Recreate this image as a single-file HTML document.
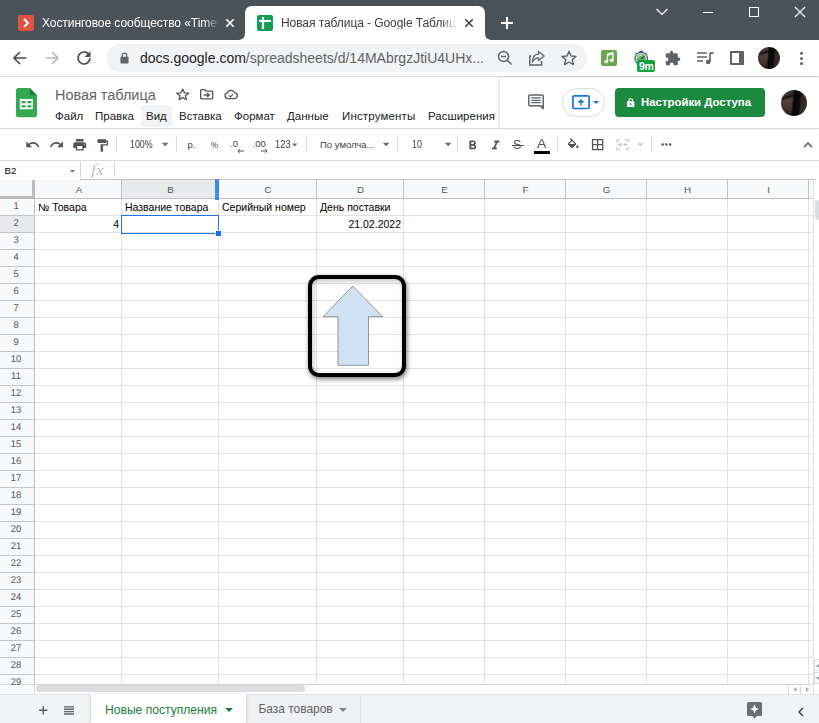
<!DOCTYPE html>
<html lang="ru"><head><meta charset="utf-8"><title>Новая таблица - Google Таблицы</title>
<style>
*{box-sizing:border-box;margin:0;padding:0}
html,body{width:819px;height:723px;overflow:hidden;background:#fff;font-family:"Liberation Sans",sans-serif;}
.a{position:absolute}
.t{position:absolute;white-space:nowrap;line-height:1}
svg{position:absolute;overflow:visible}
#tabstrip{left:0;top:0;width:819px;height:40px;background:#4a535a}
#navbar{left:0;top:40px;width:819px;height:37px;background:#fff;border-bottom:1px solid #d9dadb}
#pill{left:106px;top:44px;width:481px;height:28px;border-radius:14px;background:#f1f3f4}
.vl{position:absolute;top:199px;width:1px;height:485px;background:#e2e2e2}
.hl{position:absolute;left:35px;width:779px;height:1px;background:#e2e2e2}
.rn{position:absolute;left:-1px;width:34px;text-align:center;font-size:10.100px;transform:scale(0.930,0.960) rotate(0.03deg);transform-origin:50% 83%;color:#50545a;line-height:1}
.cn{position:absolute;top:185.200px;text-align:center;font-size:9.700px;color:#50545a;line-height:1}
.cell{position:absolute;font-size:10.5px;color:#000;line-height:1;white-space:nowrap}
.menu{position:absolute;top:110.600px;font-size:11.5px;color:#202124;line-height:1;white-space:nowrap}
.sep{position:absolute;top:136px;width:1px;height:16px;background:#dadce0}
.tb{position:absolute;font-size:9.5px;color:#3c4043;line-height:1;white-space:nowrap}
</style></head><body>
<div class="a" id="tabstrip"></div>
<svg style="left:0;top:0" width="819" height="40"><path d="M237 40 C243 40 245 38 245 32 L245 14 C245 8.500 247.500 6 253 6 L477 6 C482.500 6 485 8.500 485 14 L485 32 C485 38 487 40 493 40 Z" fill="#fff"/></svg>
<div class="a" style="left:18px;top:15px;width:16px;height:16px;background:#e0533f;border-radius:2px"></div>
<svg style="left:18px;top:15px" width="16" height="16"><path d="M6 4 L10 8 L6 12" fill="none" stroke="#fff" stroke-width="2"/></svg>
<div class="t" style="left:42px;top:17px;font-size:12px;letter-spacing:-0.060px;color:#fff;width:178px;overflow:hidden;-webkit-mask-image:linear-gradient(90deg,#000 162px,transparent 177px)">Хостинговое сообщество «Timeweb»</div>
<svg style="left:226px;top:19.300px" width="8" height="8"><path d="M0.300 0.300 L7.700 7.700 M7.700 0.300 L0.300 7.700" stroke="#fff" stroke-width="1.600" fill="none"/></svg>
<div class="a" style="left:257px;top:15px;width:16px;height:16px;background:#0f9d58;border-radius:2px"></div>
<svg style="left:257px;top:15px" width="16" height="16"><path d="M2 6 H14 M6 2 V14" stroke="#fff" stroke-width="2.2" fill="none"/></svg>
<div class="t" style="left:281px;top:17px;font-size:12px;letter-spacing:-0.070px;color:#3c4043;width:178px;overflow:hidden;-webkit-mask-image:linear-gradient(90deg,#000 160px,transparent 176px)">Новая таблица - Google Таблицы</div>
<svg style="left:465px;top:19.300px" width="8" height="8"><path d="M0.300 0.300 L7.700 7.700 M7.700 0.300 L0.300 7.700" stroke="#3c4043" stroke-width="1.600" fill="none"/></svg>
<svg style="left:501px;top:17px" width="12" height="12"><path d="M6 0 V12 M0 6 H12" stroke="#fff" stroke-width="2" fill="none"/></svg>
<svg style="left:656px;top:8px" width="12" height="8"><path d="M0.500 1 L6 6.500 L11.500 1" stroke="#fff" stroke-width="1.100" fill="none"/></svg>
<div class="a" style="left:703px;top:12px;width:10px;height:1px;background:#fff"></div>
<div class="a" style="left:749px;top:7px;width:10px;height:10px;border:1px solid #fff"></div>
<svg style="left:795px;top:7px" width="10" height="10"><path d="M0 0 L10 10 M10 0 L0 10" stroke="#fff" stroke-width="1.100" fill="none"/></svg>
<div class="a" id="navbar"></div>
<div class="a" id="pill"></div>
<svg style="left:13px;top:51px" width="14" height="14"><path d="M13.500 7 H1.500 M7 1 L1 7 L7 13" stroke="#4a4e52" stroke-width="1.700" fill="none"/></svg>
<svg style="left:45px;top:51px" width="14" height="14"><path d="M0.500 7 H12.500 M7 1 L13 7 L7 13" stroke="#b5b8bb" stroke-width="1.700" fill="none"/></svg>
<svg style="left:76px;top:50px" width="16" height="16"><path d="M12.500 4 A6 6 0 1 0 14 8" stroke="#4a4e52" stroke-width="1.700" fill="none"/><path d="M14.500 1 V7 H8.500 Z" fill="#4a4e52"/></svg>
<svg style="left:119.500px;top:51.500px" width="9" height="12" viewBox="0 0 10 13"><rect x="0.500" y="5" width="9" height="7.500" rx="1" fill="#5f6368"/><path d="M2.500 5.500 V3.500 A2.500 2.500 0 0 1 7.500 3.500 V5.500" stroke="#5f6368" stroke-width="1.400" fill="none"/></svg>
<div class="t" style="left:140px;top:51px;font-size:14px;color:#202124">docs.google.com<span style="color:#5f6368">/spreadsheets/d/14MAbrgzJtiU4UHx...</span></div>
<svg style="left:497px;top:50px" width="16" height="16"><circle cx="6.500" cy="6.500" r="5" stroke="#5f6368" stroke-width="1.500" fill="none"/><path d="M10.200 10.200 L14.500 14.500 M4 6.500 H9" stroke="#5f6368" stroke-width="1.500" fill="none"/></svg>
<svg style="left:529px;top:50px" width="17" height="16"><path d="M2 6 H0.800 V15 H12.500 V11" stroke="#5f6368" stroke-width="1.400" fill="none"/><path d="M9.500 1.500 L15 6 L9.500 10.500 V7.800 C6 7.800 4.500 9.500 3.500 12 C3.500 7.500 6 4.500 9.500 4.200 Z" stroke="#5f6368" stroke-width="1.300" fill="none" stroke-linejoin="round"/></svg>
<svg style="left:561px;top:50px" width="16" height="16"><path d="M8 1.300 L10 6 L15 6.400 L11.200 9.700 L12.400 14.600 L8 12 L3.600 14.600 L4.800 9.700 L1 6.400 L6 6 Z" stroke="#5f6368" stroke-width="1.400" fill="none" stroke-linejoin="round"/></svg>
<div class="a" style="left:601px;top:50px;width:16px;height:16px;background:#6aa84f;border-radius:2px"></div>
<svg style="left:601px;top:50px" width="16" height="16"><ellipse cx="5.200" cy="11.600" rx="2" ry="1.600" fill="#fff"/><ellipse cx="10.600" cy="10.300" rx="2" ry="1.600" fill="#fff"/><path d="M6.500 11.600 V4.200 L11.900 2.900 V10.300" stroke="#fff" stroke-width="1.300" fill="none"/><path d="M6.500 3.600 L11.900 2.300 V4.600 L6.500 5.900 Z" fill="#fff"/></svg>
<svg style="left:633px;top:48.800px" width="24" height="24"><circle cx="8.200" cy="9.500" r="6.300" stroke="#1d4e6f" stroke-width="1.100" fill="#fff"/><path d="M6.300 2.300 H10.100 M8.200 2.300 V3.500 M13 4.700 L13.900 3.800 M3.400 4.700 L2.500 3.800" stroke="#1d4e6f" stroke-width="1" fill="none"/><circle cx="8.200" cy="9.500" r="4.700" fill="#6ab04c"/><path d="M5 9 A3.500 3.500 0 0 1 9 6.200" stroke="#d7ecc9" stroke-width="1" fill="none"/><path d="M8 10 L11.500 7.300" stroke="#1d4e6f" stroke-width="1.200"/></svg>
<div class="a" style="left:637px;top:60px;width:18px;height:12px;background:#12a03f;border-radius:2px"></div>
<div class="t" style="left:639px;top:61px;font-size:10.500px;font-weight:bold;color:#fff;letter-spacing:-0.400px">9m</div>
<svg style="left:665px;top:50px" width="16" height="16"><path d="M6.500 0.800 A1.600 1.600 0 0 1 8.100 2.400 V3.200 H11.500 A1.300 1.300 0 0 1 12.800 4.500 V7.500 H13.600 A1.800 1.800 0 0 1 13.600 11.100 H12.800 V14 A1.300 1.300 0 0 1 11.500 15.300 H8.700 V14.400 A1.900 1.900 0 0 0 4.900 14.400 V15.300 H2 A1.300 1.300 0 0 1 0.700 14 V11.200 H1.600 A1.900 1.900 0 0 0 1.600 7.400 H0.700 V4.500 A1.300 1.300 0 0 1 2 3.200 H4.900 V2.400 A1.600 1.600 0 0 1 6.500 0.800 Z" fill="#5f6368"/></svg>
<svg style="left:697px;top:50px" width="17" height="16"><path d="M0 3 H10 M0 7 H10 M0 11 H6" stroke="#5f6368" stroke-width="1.700"/><path d="M13 3 V11.500" stroke="#5f6368" stroke-width="1.600"/><path d="M13 3 H16.500" stroke="#5f6368" stroke-width="1.800"/><circle cx="11.200" cy="12" r="2.300" fill="#5f6368"/></svg>
<div class="a" style="left:730px;top:51px;width:14px;height:14px;border:2px solid #5f6368;border-right-width:5.500px;border-radius:1px"></div>
<div class="a" style="left:758px;top:47px;width:22px;height:22px;border-radius:11px;background:linear-gradient(165deg,transparent 18%,rgba(10,10,10,0.800) 26%,transparent 36%),linear-gradient(95deg,transparent 42%,#090807 49%,#0d0b0a 68%,#33261f 76%,#3a2c26 100%),linear-gradient(180deg,#352a25 0,#57453b 30%,#4a3830 60%,#2a1f1a 100%)"></div>
<svg style="left:800px;top:51px" width="4" height="16"><circle cx="1.500" cy="2.300" r="1.500" fill="#5f6368"/><circle cx="1.500" cy="7.400" r="1.500" fill="#5f6368"/><circle cx="1.500" cy="12.500" r="1.500" fill="#5f6368"/></svg>
<svg style="left:16.400px;top:87.800px" width="21" height="29.300"><path d="M2.500 0 H13.800 L21 7.200 V26.800 A2.500 2.500 0 0 1 18.500 29.300 H2.500 A2.500 2.500 0 0 1 0 26.800 V2.500 A2.500 2.500 0 0 1 2.500 0 Z" fill="#34a853"/><path d="M13.800 0 L21 7.200 H13.800 Z" fill="#188038"/><path d="M3.800 11.100 H16.800 V21.300 H3.800 Z M5.500 13.100 V15.200 H9.600 V13.100 Z M11.300 13.100 V15.200 H15.500 V13.100 Z M5.500 17.200 V19.400 H9.600 V17.200 Z M11.300 17.200 V19.400 H15.500 V17.200 Z" fill="#fff" fill-rule="evenodd"/></svg>
<div class="t" style="left:55px;top:87.500px;font-size:14.450px;color:#5f6368">Новая таблица</div>
<svg style="left:176.200px;top:87.600px" width="13.430" height="12.700" viewBox="0 0 15 15" preserveAspectRatio="none"><path d="M7.500 1.200 L9.400 5.700 L14.200 6.100 L10.500 9.200 L11.700 13.900 L7.500 11.400 L3.300 13.900 L4.500 9.200 L0.800 6.100 L5.600 5.700 Z" stroke="#53575c" stroke-width="1.450" fill="none" stroke-linejoin="round"/></svg>
<svg style="left:200.330px;top:89px" width="13.330" height="10.620" viewBox="0 0 14 12" preserveAspectRatio="none"><path d="M1.500 0.800 H5 L6.300 2.300 H12.500 A0.800 0.800 0 0 1 13.300 3.100 V10.400 A0.800 0.800 0 0 1 12.500 11.200 H1.500 A0.800 0.800 0 0 1 0.700 10.400 V1.600 A0.800 0.800 0 0 1 1.500 0.800 Z" stroke="#53575c" stroke-width="1.450" fill="none"/><path d="M4 6.800 H9.500 M7.500 4.500 L9.800 6.800 L7.500 9.100" stroke="#53575c" stroke-width="1.450" fill="none"/></svg>
<svg style="left:224.200px;top:88.700px" width="13.700" height="10.580" viewBox="0 0 15 12" preserveAspectRatio="none"><path d="M4 10.800 A3.200 3.200 0 0 1 3.600 4.500 A4.200 4.200 0 0 1 11.600 4.400 A3.200 3.200 0 0 1 11.400 10.800 Z" stroke="#53575c" stroke-width="1.450" fill="none"/><path d="M5.300 7.300 L7 9 L10 5.800" stroke="#53575c" stroke-width="1.300" fill="none"/></svg>
<div class="a" style="left:141px;top:105px;width:31px;height:22px;background:#f1f3f4;border-radius:4px"></div>
<div class="menu" style="left:55px">Файл</div>
<div class="menu" style="left:95px">Правка</div>
<div class="menu" style="left:146px">Вид</div>
<div class="menu" style="left:179px">Вставка</div>
<div class="menu" style="left:234px">Формат</div>
<div class="menu" style="left:287px">Данные</div>
<div class="menu" style="left:342px;letter-spacing:0.150px">Инструменты</div>
<div class="menu" style="left:428px">Расширения</div>
<div class="a" style="left:500px;top:78px;width:319px;height:50px;background:#fff;box-shadow:-1px 0 3px rgba(0,0,0,0.160)"></div>
<div class="a" style="left:0;top:128px;width:819px;height:1px;background:#dadce0"></div>
<svg style="left:528px;top:93.800px" width="16" height="16"><path d="M2 0.900 H14 A1.200 1.200 0 0 1 15.200 2.100 V14.600 L12.200 11.700 H2 A1.200 1.200 0 0 1 0.800 10.500 V2.100 A1.200 1.200 0 0 1 2 0.900 Z" fill="#fff" stroke="#5f6368" stroke-width="1.500" stroke-linejoin="round"/><path d="M3.200 3.900 H12.800 M3.200 6.300 H12.800 M3.200 8.700 H12.800" stroke="#5f6368" stroke-width="1.300"/><path d="M12 11.500 L15.200 14.800 V11.500 Z" fill="#5f6368"/></svg>
<div class="a" style="left:562px;top:88px;width:43px;height:29px;border:1px solid #dadce0;border-radius:15px;background:#fff"></div>
<svg style="left:572px;top:95px" width="18" height="14.400"><rect x="0.900" y="0.900" width="16.200" height="12.600" rx="1.200" stroke="#1a73e8" stroke-width="1.700" fill="none"/><path d="M9 10.500 V5.300 M6.500 7.600 L9 5.100 L11.500 7.600" stroke="#1a73e8" stroke-width="1.500" fill="none"/></svg>
<svg style="left:593.300px;top:101.100px" width="6.200" height="2.900"><path d="M0 0 H6.200 L3.100 2.900 Z" fill="#1a73e8"/></svg>
<div class="a" style="left:615px;top:88px;width:150px;height:29px;background:#1c8a3e;border-radius:4px"></div>
<svg style="left:626.700px;top:97.500px" width="7.400" height="9"><rect x="0" y="3.300" width="7.400" height="5.700" rx="0.800" fill="#fff"/><path d="M1.900 3.800 V2.500 A1.800 1.800 0 0 1 5.500 2.500 V3.800" stroke="#fff" stroke-width="1.100" fill="none"/><circle cx="3.700" cy="6.200" r="0.850" fill="#1e8e3e"/></svg>
<div class="t" style="left:641px;top:97px;font-size:11.4px;font-weight:bold;color:#fff">Настройки Доступа</div>
<div class="a" style="left:781px;top:89.500px;width:26px;height:26px;border-radius:13px;background:linear-gradient(165deg,transparent 18%,rgba(10,10,10,0.800) 26%,transparent 36%),linear-gradient(95deg,transparent 42%,#090807 49%,#0d0b0a 68%,#33261f 76%,#3a2c26 100%),linear-gradient(180deg,#352a25 0,#57453b 30%,#4a3830 60%,#2a1f1a 100%)"></div>
<div class="a" style="left:0;top:160px;width:819px;height:1px;background:#dadce0"></div>
<svg style="left:25.03px;top:137.08px" width="15.24" height="15.24" viewBox="0 0 24 24"><path d="M12.5 8c-2.65 0-5.05.99-6.9 2.6L2 7v9h9l-3.62-3.62c1.39-1.16 3.16-1.88 5.12-1.88 3.54 0 6.55 2.31 7.6 5.5l2.37-.78C21.08 11.03 17.15 8 12.5 8z" fill="#50545a"/></svg>
<svg style="left:49.03px;top:137.08px" width="15.24" height="15.24" viewBox="0 0 24 24"><path d="M18.4 10.6C16.55 8.99 14.15 8 11.5 8c-4.65 0-8.58 3.03-9.96 7.22L3.9 16c1.05-3.19 4.05-5.5 7.6-5.5 1.95 0 3.73.72 5.12 1.88L13 16h9V7l-3.6 3.6z" fill="#50545a"/></svg>
<svg style="left:71.56px;top:137.26px" width="15.48" height="15.48" viewBox="0 0 24 24"><path d="M19 8H5c-1.66 0-3 1.34-3 3v6h4v4h12v-4h4v-6c0-1.66-1.34-3-3-3zm-3 11H8v-5h8v5zm3-7c-.55 0-1-.45-1-1s.45-1 1-1 1 .45 1 1-.45 1-1 1zm-1-9H6v4h12V3z" fill="#50545a"/></svg>
<svg style="left:94.96px;top:137.56px" width="14.88" height="14.88" viewBox="0 0 24 24"><path d="M18 4V3c0-.55-.45-1-1-1H5c-.55 0-1 .45-1 1v4c0 .55.45 1 1 1h12c.55 0 1-.45 1-1V6h1v4H9v11c0 .55.45 1 1 1h2c.55 0 1-.45 1-1v-9h8V4h-3z" fill="#50545a"/></svg>
<svg style="left:157.24px;top:135.94px" width="16.32" height="16.32" viewBox="0 0 24 24"><path d="M7 10l5 5 5-5z" fill="#6a6e73"/></svg>
<svg style="left:288.08px;top:138.28px" width="13.44" height="13.44" viewBox="0 0 24 24"><path d="M7 10l5 5 5-5z" fill="#6a6e73"/></svg>
<svg style="left:378.14px;top:135.94px" width="16.32" height="16.32" viewBox="0 0 24 24"><path d="M7 10l5 5 5-5z" fill="#6a6e73"/></svg>
<svg style="left:439.54px;top:135.94px" width="16.32" height="16.32" viewBox="0 0 24 24"><path d="M7 10l5 5 5-5z" fill="#6a6e73"/></svg>
<svg style="left:465.24px;top:138.14px" width="15.12" height="15.12" viewBox="0 0 24 24"><path d="M15.6 10.79c.97-.67 1.65-1.77 1.65-2.79 0-2.26-1.75-4-4-4H7v14h7.04c2.09 0 3.71-1.7 3.71-3.79 0-1.52-.86-2.82-2.15-3.42zM10 6.5h3c.83 0 1.5.67 1.5 1.5s-.67 1.5-1.5 1.5h-3v-3zm3.5 9H10v-3h3.5c.83 0 1.5.67 1.5 1.5s-.67 1.5-1.5 1.5z" fill="#50545a"/></svg>
<svg style="left:488.34px;top:138.14px" width="15.12" height="15.12" viewBox="0 0 24 24"><path d="M10 4v3h2.21l-3.42 8H6v3h8v-3h-2.21l3.42-8H18V4z" fill="#50545a"/></svg>
<svg style="left:566.00px;top:138.40px" width="14.40" height="14.40" viewBox="0 0 24 24"><path d="M16.56 8.94L7.62 0 6.21 1.41l2.38 2.38-5.15 5.15c-.59.59-.59 1.54 0 2.12l5.5 5.5c.29.29.68.44 1.06.44s.77-.15 1.06-.44l5.5-5.5c.59-.58.59-1.53 0-2.12zM5.21 10L10 5.21 14.79 10H5.210zM19 11.5s-2 2.170-2 3.500c0 1.100.9 2 2 2s2-.9 2-2c0-1.330-2-3.500-2-3.500z" fill="#50545a"/></svg>
<svg style="left:590.08px;top:137.08px" width="15.24" height="15.24" viewBox="0 0 24 24"><path d="M3 3v18h18V3H3zm8 16H5v-6h6v6zm0-8H5V5h6v6zm8 8h-6v-6h6v6zm0-8h-6V5h6v6z" fill="#50545a"/></svg>
<svg style="left:632.96px;top:137.46px" width="14.88" height="14.88" viewBox="0 0 24 24"><path d="M7 10l5 5 5-5z" fill="#c4c7ca"/></svg>
<svg style="left:659.36px;top:137.36px" width="14.88" height="14.88" viewBox="0 0 24 24"><path d="M6 10c-1.100 0-2 .9-2 2s.9 2 2 2 2-.9 2-2-.9-2-2-2zm12 0c-1.100 0-2 .9-2 2s.9 2 2 2 2-.9 2-2-.9-2-2-2zm-6 0c-1.100 0-2 .9-2 2s.9 2 2 2 2-.9 2-2-.9-2-2-2z" fill="#50545a"/></svg>
<svg style="left:799.40px;top:135.50px" width="18.00" height="18.00" viewBox="0 0 24 24"><path d="M7.410 15.410L12 10.830l4.590 4.580L18 14l-6-6-6 6z" fill="#50545a"/></svg>
<div class="sep" style="left:116px"></div>
<div class="tb" style="left:130.400px;top:139.500px;font-size:10px;transform:scaleX(0.885);transform-origin:0 0">100%</div>
<div class="sep" style="left:176px"></div>
<div class="tb" style="left:187.500px;top:140px;font-size:9.5px">р.</div>
<div class="tb" style="left:210.800px;top:139.800px;font-size:9.500px;transform:scaleX(0.82);transform-origin:0 0">%</div>
<div class="tb" style="left:230.200px;top:139px;font-size:9.5px">.0</div>
<svg style="left:236.500px;top:148.500px" width="7" height="4"><path d="M7 2 H1 M2.800 0.300 L1 2 L2.800 3.700" stroke="#50545a" stroke-width="1" fill="none"/></svg>
<div class="tb" style="left:252.500px;top:139px;font-size:9.5px">.00</div>
<svg style="left:260.500px;top:149px" width="7" height="4"><path d="M0 2 H6 M4.200 0.300 L6 2 L4.200 3.700" stroke="#50545a" stroke-width="1" fill="none"/></svg>
<div class="tb" style="left:275px;top:139.500px;font-size:10px;transform:scaleX(0.935);transform-origin:0 0">123</div>
<div class="sep" style="left:306px"></div>
<div class="tb" style="left:320px;top:140px;font-size:9.5px">По умолча...</div>
<div class="sep" style="left:397px"></div>
<div class="tb" style="left:411.500px;top:139.500px;font-size:10px;transform:scaleX(0.9);transform-origin:0 0">10</div>
<div class="sep" style="left:457px"></div>
<div class="tb" style="left:513px;top:138.500px;font-size:12.500px;color:#50545a">S</div>
<div class="a" style="left:512.400px;top:144.600px;width:11.600px;height:1.200px;background:#50545a"></div>
<div class="tb" style="left:536.800px;top:137px;font-size:13px;color:#50545a;transform:scaleX(1.08);transform-origin:0 0">A</div>
<div class="a" style="left:534px;top:151px;width:16px;height:3px;background:#000"></div>
<div class="sep" style="left:557px"></div>
<svg style="left:616px;top:139.200px" width="13" height="11.300"><path d="M0.700 3.500 V0.700 H4 M9 0.700 H12.300 V3.500 M12.300 7.800 V10.600 H9 M4 10.600 H0.700 V7.800" stroke="#c4c7ca" stroke-width="1.400" fill="none" stroke-dasharray="2.2 0.9"/><path d="M1.500 5.650 H5.300 M3.800 4.200 L5.300 5.650 L3.800 7.100 M11.500 5.650 H7.700 M9.200 4.200 L7.700 5.650 L9.200 7.100" stroke="#c4c7ca" stroke-width="1.100" fill="none"/></svg>
<div class="sep" style="left:651px"></div>
<div class="t" style="left:4.500px;top:166px;font-size:9.6px;color:#000">B2</div>
<svg style="left:69.800px;top:169.500px" width="5" height="2.600"><path d="M0 0 H5 L2.500 2.600 Z" fill="#666"/></svg>
<div class="a" style="left:80px;top:162px;width:1px;height:17px;background:#d4d6da"></div>
<div class="t" style="left:90.500px;top:162.500px;font-size:15px;font-style:italic;color:#bfbfbf;font-family:'Liberation Serif',serif;transform:scaleX(1.2);transform-origin:0 0">fx</div>
<div class="a" style="left:114px;top:163px;width:1px;height:14px;background:#d4d6da"></div>
<div class="a" style="left:0;top:180px;width:814px;height:19px;background:#f8f9fa;border-bottom:1px solid #c0c0c0"></div><div class="a" style="left:80px;top:179px;width:736px;height:1px;background:#c4c4c4"></div>
<div class="a" style="left:0;top:199px;width:35px;height:485px;background:#f8f9fa"></div>
<div class="a" style="left:122px;top:180px;width:96px;height:18px;background:#e8eaed"></div>
<div class="a" style="left:0;top:216px;width:34px;height:16px;background:#e8eaed"></div>
<div class="hl" style="top:215px"></div><div class="a" style="left:0;top:215px;width:35px;height:1px;background:#c6c6c6"></div>
<div class="hl" style="top:232px"></div><div class="a" style="left:0;top:232px;width:35px;height:1px;background:#c6c6c6"></div>
<div class="hl" style="top:249px"></div><div class="a" style="left:0;top:249px;width:35px;height:1px;background:#c6c6c6"></div>
<div class="hl" style="top:266px"></div><div class="a" style="left:0;top:266px;width:35px;height:1px;background:#c6c6c6"></div>
<div class="hl" style="top:283px"></div><div class="a" style="left:0;top:283px;width:35px;height:1px;background:#c6c6c6"></div>
<div class="hl" style="top:300px"></div><div class="a" style="left:0;top:300px;width:35px;height:1px;background:#c6c6c6"></div>
<div class="hl" style="top:317px"></div><div class="a" style="left:0;top:317px;width:35px;height:1px;background:#c6c6c6"></div>
<div class="hl" style="top:334px"></div><div class="a" style="left:0;top:334px;width:35px;height:1px;background:#c6c6c6"></div>
<div class="hl" style="top:351px"></div><div class="a" style="left:0;top:351px;width:35px;height:1px;background:#c6c6c6"></div>
<div class="hl" style="top:368px"></div><div class="a" style="left:0;top:368px;width:35px;height:1px;background:#c6c6c6"></div>
<div class="hl" style="top:385px"></div><div class="a" style="left:0;top:385px;width:35px;height:1px;background:#c6c6c6"></div>
<div class="hl" style="top:402px"></div><div class="a" style="left:0;top:402px;width:35px;height:1px;background:#c6c6c6"></div>
<div class="hl" style="top:419px"></div><div class="a" style="left:0;top:419px;width:35px;height:1px;background:#c6c6c6"></div>
<div class="hl" style="top:436px"></div><div class="a" style="left:0;top:436px;width:35px;height:1px;background:#c6c6c6"></div>
<div class="hl" style="top:453px"></div><div class="a" style="left:0;top:453px;width:35px;height:1px;background:#c6c6c6"></div>
<div class="hl" style="top:470px"></div><div class="a" style="left:0;top:470px;width:35px;height:1px;background:#c6c6c6"></div>
<div class="hl" style="top:487px"></div><div class="a" style="left:0;top:487px;width:35px;height:1px;background:#c6c6c6"></div>
<div class="hl" style="top:504px"></div><div class="a" style="left:0;top:504px;width:35px;height:1px;background:#c6c6c6"></div>
<div class="hl" style="top:521px"></div><div class="a" style="left:0;top:521px;width:35px;height:1px;background:#c6c6c6"></div>
<div class="hl" style="top:538px"></div><div class="a" style="left:0;top:538px;width:35px;height:1px;background:#c6c6c6"></div>
<div class="hl" style="top:555px"></div><div class="a" style="left:0;top:555px;width:35px;height:1px;background:#c6c6c6"></div>
<div class="hl" style="top:572px"></div><div class="a" style="left:0;top:572px;width:35px;height:1px;background:#c6c6c6"></div>
<div class="hl" style="top:589px"></div><div class="a" style="left:0;top:589px;width:35px;height:1px;background:#c6c6c6"></div>
<div class="hl" style="top:606px"></div><div class="a" style="left:0;top:606px;width:35px;height:1px;background:#c6c6c6"></div>
<div class="hl" style="top:623px"></div><div class="a" style="left:0;top:623px;width:35px;height:1px;background:#c6c6c6"></div>
<div class="hl" style="top:640px"></div><div class="a" style="left:0;top:640px;width:35px;height:1px;background:#c6c6c6"></div>
<div class="hl" style="top:657px"></div><div class="a" style="left:0;top:657px;width:35px;height:1px;background:#c6c6c6"></div>
<div class="hl" style="top:674px"></div><div class="a" style="left:0;top:674px;width:35px;height:1px;background:#c6c6c6"></div>
<div class="a" style="left:0;top:684px;width:814px;height:1px;background:#d5d5d5"></div>
<div class="vl" style="left:121px"></div><div class="a" style="left:121px;top:180px;width:1px;height:19px;background:#c0c0c0"></div>
<div class="vl" style="left:218px"></div><div class="a" style="left:218px;top:180px;width:1px;height:19px;background:#c0c0c0"></div>
<div class="vl" style="left:316px"></div><div class="a" style="left:316px;top:180px;width:1px;height:19px;background:#c0c0c0"></div>
<div class="vl" style="left:403px"></div><div class="a" style="left:403px;top:180px;width:1px;height:19px;background:#c0c0c0"></div>
<div class="vl" style="left:484px"></div><div class="a" style="left:484px;top:180px;width:1px;height:19px;background:#c0c0c0"></div>
<div class="vl" style="left:565px"></div><div class="a" style="left:565px;top:180px;width:1px;height:19px;background:#c0c0c0"></div>
<div class="vl" style="left:646px"></div><div class="a" style="left:646px;top:180px;width:1px;height:19px;background:#c0c0c0"></div>
<div class="vl" style="left:727px"></div><div class="a" style="left:727px;top:180px;width:1px;height:19px;background:#c0c0c0"></div>
<div class="vl" style="left:808px"></div><div class="a" style="left:808px;top:180px;width:1px;height:19px;background:#c0c0c0"></div>
<div class="vl" style="left:813px"></div><div class="a" style="left:813px;top:180px;width:1px;height:19px;background:#e2e2e2"></div>
<div class="a" style="left:32px;top:180px;width:3px;height:19px;background:#bcbcbc"></div>
<div class="a" style="left:34px;top:199px;width:1px;height:485px;background:#c0c0c0"></div>
<div class="a" style="left:0;top:196px;width:35px;height:3px;background:#bcbcbc"></div>
<div class="cn" style="left:36px;width:86px">A</div>
<div class="cn" style="left:122px;width:97px">B</div>
<div class="cn" style="left:219px;width:98px">C</div>
<div class="cn" style="left:317px;width:87px">D</div>
<div class="cn" style="left:404px;width:81px">E</div>
<div class="cn" style="left:485px;width:81px">F</div>
<div class="cn" style="left:566px;width:81px">G</div>
<div class="cn" style="left:647px;width:81px">H</div>
<div class="cn" style="left:728px;width:81px">I</div>
<div class="rn" style="top:200.7px">1</div>
<div class="rn" style="top:217.7px">2</div>
<div class="rn" style="top:234.7px">3</div>
<div class="rn" style="top:251.7px">4</div>
<div class="rn" style="top:268.7px">5</div>
<div class="rn" style="top:285.7px">6</div>
<div class="rn" style="top:302.7px">7</div>
<div class="rn" style="top:319.7px">8</div>
<div class="rn" style="top:336.7px">9</div>
<div class="rn" style="top:353.7px">10</div>
<div class="rn" style="top:370.7px">11</div>
<div class="rn" style="top:387.7px">12</div>
<div class="rn" style="top:404.7px">13</div>
<div class="rn" style="top:421.7px">14</div>
<div class="rn" style="top:438.7px">15</div>
<div class="rn" style="top:455.7px">16</div>
<div class="rn" style="top:472.7px">17</div>
<div class="rn" style="top:489.7px">18</div>
<div class="rn" style="top:506.7px">19</div>
<div class="rn" style="top:523.7px">20</div>
<div class="rn" style="top:540.7px">21</div>
<div class="rn" style="top:557.7px">22</div>
<div class="rn" style="top:574.7px">23</div>
<div class="rn" style="top:591.7px">24</div>
<div class="rn" style="top:608.7px">25</div>
<div class="rn" style="top:625.7px">26</div>
<div class="rn" style="top:642.7px">27</div>
<div class="rn" style="top:659.7px">28</div>
<div class="rn" style="top:676.7px">29</div>
<div class="cell" style="left:38px;top:202px">№ Товара</div>
<div class="cell" style="left:125px;top:202px">Название товара</div>
<div class="cell" style="left:222px;top:202px">Серийный номер</div>
<div class="cell" style="left:320px;top:202px">День поставки</div>
<div class="cell" style="left:36px;top:219px;width:83px;text-align:right">4</div>
<div class="cell" style="left:317px;top:219px;width:84px;text-align:right">21.02.2022</div>
<div class="a" style="left:121px;top:215.400px;width:98.200px;height:18.400px;border:1.600px solid #1a73e8"></div>
<div class="a" style="left:215.800px;top:230.500px;width:5.200px;height:5px;background:#1a73e8;box-shadow:0 0 0 0.800px #fff"></div>
<div class="a" style="left:215px;top:179px;width:4px;height:21px;background:#4285f4"></div>
<div class="a" style="left:307.500px;top:275.300px;width:98px;height:102px;border:4.400px solid #000;border-radius:11px;box-shadow:1px 2px 5px rgba(0,0,0,0.55), inset 1px 2px 5px rgba(0,0,0,0.25)"></div>
<svg style="left:320px;top:283px" width="66" height="86"><path d="M32.700 3 L62.800 33.700 H48.500 V82.300 H18 V33.700 H3 Z" fill="#cfe2f3" stroke="#7d7d7d" stroke-width="0.800"/></svg>
<div class="a" style="left:814px;top:180px;width:5px;height:505px;background:#fff"></div>
<div class="a" style="left:0;top:685px;width:819px;height:10px;background:#fff"></div>
<div class="a" style="left:0;top:685px;width:35px;height:10px;background:#f8f9fa;border-right:1px solid #dadce0"></div>
<div class="a" style="left:815px;top:200px;width:10px;height:20px;background:#dadce0;border-radius:4px"></div>
<div class="a" style="left:36px;top:685px;width:269px;height:7px;background:#dadce0;border-radius:4px"></div>
<div class="a" style="left:814px;top:659px;width:6px;height:12px;background:#f8f9fa;border:1px solid #dadce0"></div>
<div class="a" style="left:814px;top:672px;width:6px;height:12px;background:#f8f9fa;border:1px solid #dadce0"></div>
<div class="a" style="left:788px;top:685px;width:13px;height:10px;border-left:1px solid #dadce0;border-right:1px solid #dadce0"></div>
<div class="a" style="left:800px;top:685px;width:14px;height:10px;border-right:1px solid #dadce0"></div>
<svg style="left:792.500px;top:687px" width="3.500" height="5"><path d="M3.500 0 V5 L0.300 2.500 Z" fill="#a8adb3"/></svg>
<svg style="left:805.500px;top:687px" width="3.500" height="5"><path d="M0 0 V5 L3.200 2.500 Z" fill="#a8adb3"/></svg>
<svg style="left:816px;top:664px" width="4" height="3"><path d="M0 3 H4 L2 0 Z" fill="#9aa0a6"/></svg>
<svg style="left:816px;top:677px" width="4" height="3"><path d="M0 0 H4 L2 3 Z" fill="#9aa0a6"/></svg>
<div class="a" style="left:0;top:694px;width:819px;height:29px;background:#f1f3f4;border-top:1px solid #e3e4e6"></div>
<div class="a" style="left:246px;top:695px;width:115px;height:28px;background:#eef0f1;border-right:1px solid #e0e2e4"></div>
<div class="a" style="left:91px;top:694px;width:155px;height:29px;background:#fff;box-shadow:0 1px 3px rgba(60,64,67,0.300)"></div>
<svg style="left:38.800px;top:705.700px" width="8.400" height="8.400"><path d="M4.200 0 V8.400 M0 4.200 H8.400" stroke="#5f6368" stroke-width="1.500"/></svg>
<svg style="left:63.500px;top:705.500px" width="10" height="9"><path d="M0 0.800 H10 M0 3.200 H10 M0 5.600 H10 M0 8 H10" stroke="#5f6368" stroke-width="1.350"/></svg>
<div class="t" style="left:105px;top:704px;font-size:12.100px;color:#188038">Новые поступления</div>
<svg style="left:225px;top:708px" width="8" height="4"><path d="M0 0 H8 L4 4 Z" fill="#188038"/></svg>
<div class="t" style="left:258.500px;top:704px;font-size:11.950px;color:#5f6368">База товаров</div>
<svg style="left:339px;top:708px" width="8" height="4"><path d="M0 0 H8 L4 4 Z" fill="#80868b"/></svg>
<svg style="left:747px;top:702px" width="15" height="17"><path d="M1.500 0 H13.500 A1.500 1.500 0 0 1 15 1.500 V12.500 A1.500 1.500 0 0 1 13.500 14 H10 L7.500 16.500 L5 14 H1.500 A1.500 1.500 0 0 1 0 12.500 V1.500 A1.500 1.500 0 0 1 1.500 0 Z" fill="#6b6f73"/><path d="M7.500 2.500 L8.800 5.700 L12 7 L8.800 8.300 L7.500 11.500 L6.200 8.300 L3 7 L6.200 5.700 Z" fill="#fff"/></svg>
<svg style="left:798px;top:707px" width="6" height="10"><path d="M5 1 L1 5 L5 9" stroke="#444" stroke-width="1.500" fill="none"/></svg>
</body></html>
